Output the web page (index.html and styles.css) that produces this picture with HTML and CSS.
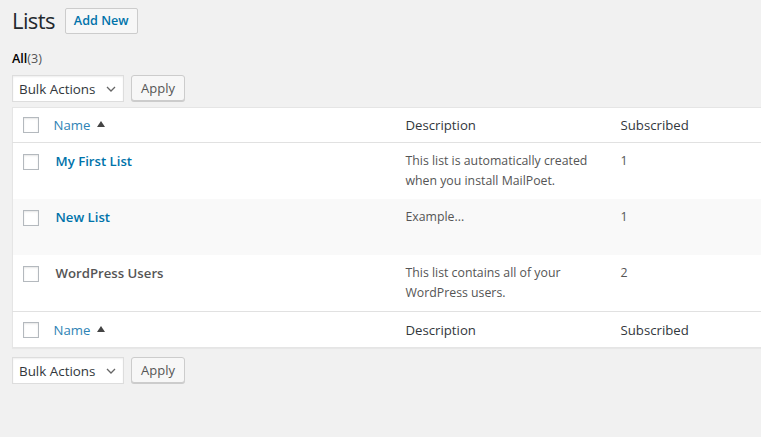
FILE: index.html
```html
<!DOCTYPE html>
<html lang="en">
<head>
  <meta charset="UTF-8">
  <title>Lists</title>
  <link rel="stylesheet" href="styles.css">
</head>
<body>
  <div class="wrap">
    <div class="page-head">
      <h1>Lists</h1>
      <a class="page-title-action" href="#">Add New</a>
    </div>

    <ul class="subsubsub">
      <li><a class="current" href="#">All</a><span class="count">(3)</span></li>
    </ul>

    <div class="tablenav">
      <div class="select">
        <span>Bulk Actions</span>
        <svg width="10" height="6" viewBox="0 0 10 6"><path d="M1 1l4 4 4-4" fill="none" stroke="#666" stroke-width="1.3"/></svg>
      </div>
      <button class="button">Apply</button>
    </div>

    <table class="list-table">
      <thead>
        <tr>
          <th class="check-column"><span class="checkbox"></span></th>
          <th class="col-name"><a href="#">Name <span class="sort-arrow"></span></a></th>
          <th class="col-desc">Description</th>
          <th class="col-sub">Subscribed</th>
        </tr>
      </thead>
      <tbody>
        <tr>
          <td class="check-column"><span class="checkbox"></span></td>
          <td class="col-name"><a class="row-title" href="#">My First List</a></td>
          <td class="col-desc">This list is automatically created<br>when you install MailPoet.</td>
          <td class="col-sub">1</td>
        </tr>
        <tr class="alt">
          <td class="check-column"><span class="checkbox"></span></td>
          <td class="col-name"><a class="row-title" href="#">New List</a></td>
          <td class="col-desc">Example...</td>
          <td class="col-sub">1</td>
        </tr>
        <tr>
          <td class="check-column"><span class="checkbox"></span></td>
          <td class="col-name"><strong class="row-title plain">WordPress Users</strong></td>
          <td class="col-desc">This list contains all of your<br>WordPress users.</td>
          <td class="col-sub">2</td>
        </tr>
      </tbody>
      <tfoot>
        <tr>
          <th class="check-column"><span class="checkbox"></span></th>
          <th class="col-name"><a href="#">Name <span class="sort-arrow"></span></a></th>
          <th class="col-desc">Description</th>
          <th class="col-sub">Subscribed</th>
        </tr>
      </tfoot>
    </table>

    <div class="tablenav bottom">
      <div class="select">
        <span>Bulk Actions</span>
        <svg width="10" height="6" viewBox="0 0 10 6"><path d="M1 1l4 4 4-4" fill="none" stroke="#666" stroke-width="1.3"/></svg>
      </div>
      <button class="button">Apply</button>
    </div>
  </div>
</body>
</html>
```

FILE: styles.css
```css
* {
  box-sizing: border-box;
  margin: 0;
  padding: 0;
}

body {
  font-family: 'Open Sans', 'Noto Sans', sans-serif;
  font-size: 12.3px;
  color: #444;
  background-color: #f1f1f1;
  overflow: hidden;
}

a {
  color: #0073aa;
  text-decoration: none;
}

.wrap {
  padding: 8px 0 0 12px;
  margin-right: -30px;
}

.page-head {
  display: flex;
  align-items: center;
  height: 25px;
}

h1 {
  font-size: 22px;
  font-weight: 400;
  letter-spacing: -0.6px;
  color: #23282d;
  line-height: 25px;
}

.page-title-action {
  margin-left: 10px;
  height: 26px;
  line-height: 24px;
  padding: 0 8px;
  font-size: 12.6px;
  font-weight: 600;
  border: 1px solid #ccc;
  border-radius: 2px;
  background-color: #f7f7f7;
}

.subsubsub {
  list-style: none;
  margin-top: 18px;
  line-height: 16px;
  font-size: 12.6px;
  color: #666;
}

.subsubsub .current {
  color: #000;
  font-weight: 600;
}

.count {
  color: #555;
}

.tablenav {
  display: flex;
  gap: 7px;
  height: 28px;
  margin-top: 8px;
}

.tablenav.bottom {
  margin-top: 9px;
}

.select {
  width: 112px;
  height: 27px;
  display: flex;
  align-items: center;
  justify-content: space-between;
  padding: 0 7px 0 6px;
  background-color: #fff;
  border: 1px solid #ddd;
  box-shadow: inset 0 1px 2px rgba(0, 0, 0, 0.07);
  font-size: 13.4px;
  color: #32373c;
}

.button {
  width: 54px;
  height: 26px;
  font-family: inherit;
  font-size: 13px;
  color: #555;
  background-color: #f7f7f7;
  border: 1px solid #ccc;
  border-radius: 3px;
  box-shadow: 0 1px 0 #ccc;
}

.list-table {
  width: 100%;
  margin-top: 4px;
  border-collapse: collapse;
  background-color: #fff;
  border: 1px solid #e5e5e5;
  box-shadow: 0 1px 1px rgba(0, 0, 0, 0.04);
  table-layout: fixed;
}

.list-table th,
.list-table td {
  text-align: left;
  vertical-align: top;
  font-weight: 400;
}

.list-table thead th,
.list-table tfoot th {
  height: 34px;
  padding: 8px 10px;
  font-size: 13.2px;
  line-height: 18px;
  color: #32373c;
}

.list-table tfoot th {
  height: 36px;
  padding-top: 9px;
}

.list-table thead tr {
  border-bottom: 1px solid #e1e1e1;
}

.list-table tfoot tr {
  border-top: 1px solid #e1e1e1;
}

.list-table td {
  height: 56px;
  padding: 8px 10px;
  line-height: 20px;
  color: #555;
}

.list-table tr.alt td {
  background-color: #f9f9f9;
}

.check-column {
  width: 31px;
}

.list-table .check-column {
  padding: 9px 0 0 10px;
}

.list-table td.check-column {
  padding-top: 11px;
}

.list-table tfoot .check-column {
  padding-top: 10px;
}

.col-name {
  width: 352px;
}

.col-desc {
  width: 215px;
}

.checkbox {
  display: block;
  width: 16px;
  height: 16px;
  border: 1px solid #b4b9be;
  background-color: #fff;
  box-shadow: inset 0 1px 2px rgba(0, 0, 0, 0.1);
}

th.col-name a {
  color: #2e83b5;
}

.sort-arrow {
  display: inline-block;
  margin-left: 3px;
  vertical-align: 3px;
  border-left: 4px solid transparent;
  border-right: 4px solid transparent;
  border-bottom: 6px solid #444;
}

.row-title {
  font-size: 13.2px;
  font-weight: 600;
  padding-left: 2px;
}

.row-title.plain {
  color: #555;
}
```
